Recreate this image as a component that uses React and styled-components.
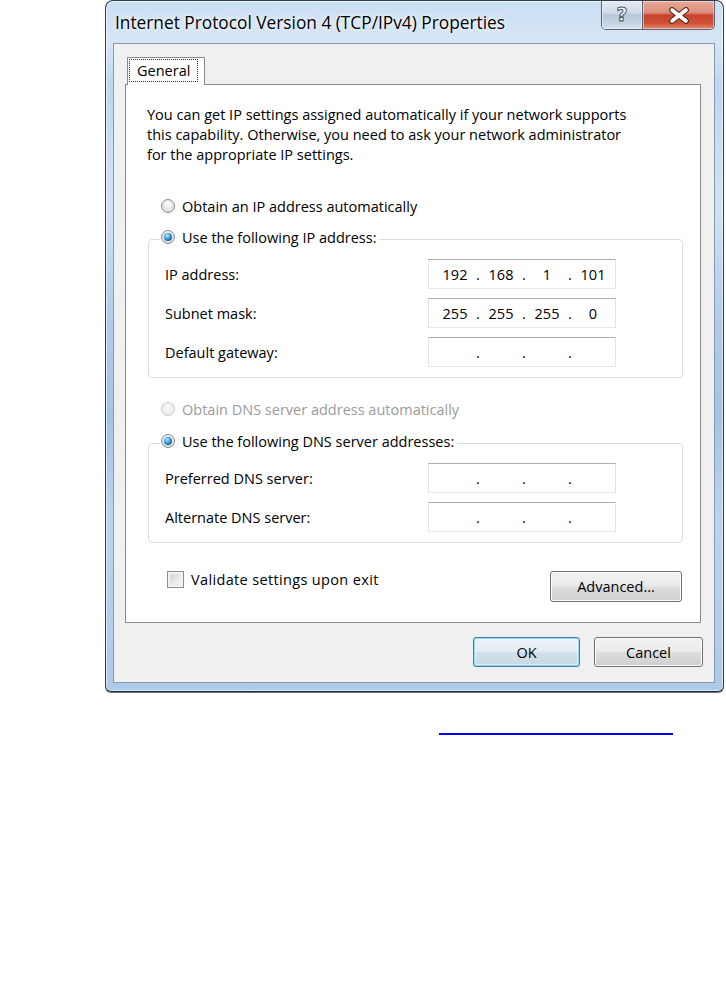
import React from 'react';
import styled, { createGlobalStyle } from 'styled-components';

const GlobalStyle = createGlobalStyle`
  html, body {
    margin: 0;
    padding: 0;
    background: #ffffff;
  }
  body {
    font-family: 'Segoe UI', 'Open Sans', 'Noto Sans', sans-serif;
    color: #000000;
  }
`;

const Page = styled.div`
  padding-left: 105px;
  display: flex;
  flex-direction: column;
`;

const Window = styled.div`
  width: 619px;
  box-sizing: border-box;
  border: 1px solid #2f3b48;
  border-bottom-color: #1f2833;
  border-radius: 8px 8px 6px 6px;
  padding: 0 8px 8px 7px;
  display: flex;
  flex-direction: column;
  background: linear-gradient(
    180deg,
    #cadef3 0%,
    #d7e6f6 6%,
    #c0d6ef 12%,
    #d2e2f4 30%,
    #b3cdeb 45%,
    #a3c3e7 60%,
    #bcd4ee 75%,
    #adcaea 100%
  );
  box-shadow: inset 0 0 0 1px rgba(255, 255, 255, 0.6), 0 1px 0 #6b7480;
`;

const TitleBar = styled.div`
  height: 42px;
  display: flex;
  align-items: flex-start;
  justify-content: space-between;
`;

const Title = styled.div`
  margin: 12px 0 0 2px;
  font-size: 17.3px;
  line-height: 20px;
  text-shadow: 0 0 8px rgba(255, 255, 255, 0.95), 0 0 3px rgba(255, 255, 255, 0.9);
`;

const CaptionButtons = styled.div`
  display: flex;
  height: 28px;
  border: 1px solid #5a6473;
  border-top: none;
  border-radius: 0 0 5px 5px;
  overflow: hidden;
`;

const CaptionButton = styled.div`
  width: ${(p) => p.$width}px;
  display: flex;
  align-items: center;
  justify-content: center;
  box-shadow: inset 0 0 0 1px rgba(255, 255, 255, 0.45);
  background: ${(p) =>
    p.$close
      ? 'linear-gradient(180deg, #e9a99a 0%, #dc8d7a 42%, #c8432c 50%, #cf4f35 78%, #e3886b 100%)'
      : 'linear-gradient(180deg, #e4ebf4 0%, #cfdbe8 42%, #b7c7da 50%, #c4d4e6 80%, #d6e3f1 100%)'};
  & + & {
    border-left: 1px solid #5a6473;
  }
`;

const HelpGlyph = styled.span`
  font-family: 'DejaVu Sans', sans-serif;
  font-weight: bold;
  font-size: 19px;
  line-height: 1;
  color: #ffffff;
  -webkit-text-stroke: 1px #4b5563;
  margin-top: -2px;
`;

const Client = styled.div`
  height: 640px;
  box-sizing: border-box;
  background: #f0f0f0;
  border: 1px solid #8799ad;
  padding: 13px 11px 15px 11px;
  display: flex;
  flex-direction: column;
`;

const TabStrip = styled.div`
  display: flex;
  padding-left: 2px;
`;

const Tab = styled.div`
  position: relative;
  margin-bottom: -1px;
  height: 28px;
  box-sizing: border-box;
  padding: 1px 6px 0 1px;
  border: 1px solid #898c95;
  border-bottom: none;
  background: #ffffff;
  font-size: 14.5px;
`;

const TabFocus = styled.div`
  height: 23px;
  box-sizing: border-box;
  padding: 0 7px;
  border: 1px dotted #333333;
  line-height: 21px;
`;

const TabPanel = styled.div`
  margin-right: 2px;
  border: 1px solid #898c95;
  background: #ffffff;
  padding: 20px 0 20px 0;
  display: flex;
  flex-direction: column;
  font-size: 14.5px;
`;

const Intro = styled.p`
  margin: 0 0 0 21px;
  line-height: 20px;
`;

const RadioRow = styled.label`
  display: flex;
  align-items: center;
  gap: 7px;
  height: 20px;
  margin: ${(p) => p.$margin || '0'};
  color: ${(p) => (p.$disabled ? '#9b9b9b' : '#000000')};
`;

const RadioMark = styled.span`
  width: 14px;
  height: 14px;
  box-sizing: border-box;
  border-radius: 50%;
  flex-shrink: 0;
  border: 1px solid ${(p) => (p.$disabled ? '#c9c9c9' : '#8b8d8f')};
  background: ${(p) =>
    p.$disabled
      ? 'radial-gradient(circle at 50% 35%, #fbfbfb, #e9e9e9 80%)'
      : 'radial-gradient(circle at 50% 35%, #ffffff, #d6d6d6 85%)'};
  display: flex;
  align-items: center;
  justify-content: center;

  &::after {
    content: '';
    display: ${(p) => (p.$checked ? 'block' : 'none')};
    width: 8px;
    height: 8px;
    border-radius: 50%;
    background: radial-gradient(circle at 40% 35%, #c6ecff 0%, #48aee6 35%, #11589a 75%, #0a3a66 100%);
  }
`;

const Group = styled.fieldset`
  margin: ${(p) => p.$margin || '0'} 17px 0 22px;
  border: 1px solid #d5dfe5;
  border-radius: 4px;
  padding: 8px 66px 10px 11px;
  min-inline-size: 0;
`;

const GroupLegend = styled.legend`
  padding: 0 3px 4px 1px;
`;

const Fields = styled.div`
  display: flex;
  flex-direction: column;
  gap: 9px;
  padding-left: 5px;
`;

const FieldRow = styled.div`
  display: grid;
  grid-template-columns: 1fr 188px;
  align-items: center;
`;

const IpBox = styled.div`
  height: 30px;
  box-sizing: border-box;
  border: 1px solid #e2e3ea;
  border-top-color: #abadb3;
  border-bottom-color: #e3e9ef;
  background: #ffffff;
  display: flex;
  align-items: center;
  padding-left: 6px;
`;

const Octet = styled.span`
  width: 40px;
  text-align: center;
`;

const Dot = styled.span`
  width: 6px;
  text-align: center;
`;

const BottomRow = styled.div`
  display: flex;
  justify-content: space-between;
  align-items: flex-start;
  margin: 26px 18px 0 41px;
`;

const CheckRow = styled.label`
  display: flex;
  align-items: center;
  gap: 7px;
  height: 20px;
`;

const CheckMark = styled.span`
  width: 17px;
  height: 17px;
  box-sizing: border-box;
  border: 1px solid #8e8f8f;
  background: linear-gradient(135deg, #cfcfcf 0%, #e6e6e6 50%, #f7f7f7 100%);
  box-shadow: inset 0 0 0 2px #f2f2f2;
`;

const CheckText = styled.span`
  letter-spacing: 0.35px;
`;

const Button = styled.button`
  width: ${(p) => p.$width}px;
  height: ${(p) => p.$height || 30}px;
  margin-top: ${(p) => p.$offset || 0}px;
  box-sizing: border-box;
  font-family: inherit;
  font-size: 14.5px;
  color: #000000;
  border-radius: 3px;
  border: 1px solid ${(p) => (p.$default ? '#3c7fb1' : '#707070')};
  background: ${(p) =>
    p.$default
      ? 'linear-gradient(180deg, #edf3f7 0%, #e3ecf2 48%, #d3e0e9 52%, #c8d7e2 100%)'
      : 'linear-gradient(180deg, #f2f2f2 0%, #ebebeb 48%, #dddddd 52%, #cfcfcf 100%)'};
  box-shadow: ${(p) =>
    p.$default
      ? 'inset 0 0 0 1px #8fd6f5, inset 0 0 0 2px rgba(255,255,255,0.5)'
      : 'inset 0 0 0 1px #fcfcfc'};
  padding: 0;
`;

const ButtonRow = styled.div`
  display: flex;
  justify-content: flex-end;
  gap: 14px;
  margin-top: 14px;
`;

const LinkRow = styled.div`
  margin: 41px 0 0 334px;
`;

const LinkRule = styled.a`
  display: block;
  width: 234px;
  height: 0;
  border-bottom: 2px solid #0000ff;
`;

const CloseIcon = () => (
  <svg width="24" height="17" viewBox="0 0 24 17">
    <path d="M5 3 L19 14 M19 3 L5 14" stroke="#5a2a22" strokeWidth="6" strokeLinecap="round" />
    <path d="M5 3 L19 14 M19 3 L5 14" stroke="#ffffff" strokeWidth="3.6" strokeLinecap="round" />
  </svg>
);

const Radio = ({ checked, disabled, children, margin }) => (
  <RadioRow $disabled={disabled} $margin={margin}>
    <RadioMark $checked={checked} $disabled={disabled} />
    {children}
  </RadioRow>
);

const IpField = ({ octets = ['', '', '', ''] }) => (
  <IpBox>
    {octets.map((o, i) => (
      <React.Fragment key={i}>
        <Octet>{o}</Octet>
        {i < 3 && <Dot>.</Dot>}
      </React.Fragment>
    ))}
  </IpBox>
);

const Field = ({ label, octets }) => (
  <FieldRow>
    <span>{label}</span>
    <IpField octets={octets} />
  </FieldRow>
);

const App = () => (
  <Page>
    <GlobalStyle />
    <Window>
      <TitleBar>
        <Title>Internet Protocol Version 4 (TCP/IPv4) Properties</Title>
        <CaptionButtons>
          <CaptionButton $width={40}>
            <HelpGlyph>?</HelpGlyph>
          </CaptionButton>
          <CaptionButton $width={71} $close>
            <CloseIcon />
          </CaptionButton>
        </CaptionButtons>
      </TitleBar>
      <Client>
        <TabStrip>
          <Tab>
            <TabFocus>General</TabFocus>
          </Tab>
        </TabStrip>
        <TabPanel>
          <Intro>
            You can get IP settings assigned automatically if your network supports
            <br />
            this capability. Otherwise, you need to ask your network administrator
            <br />
            for the appropriate IP settings.
          </Intro>
          <Radio margin="31px 0 0 35px">Obtain an IP address automatically</Radio>
          <Group $margin="11px">
            <GroupLegend>
              <Radio checked>Use the following IP address:</Radio>
            </GroupLegend>
            <Fields>
              <Field label="IP address:" octets={['192', '168', '1', '101']} />
              <Field label="Subnet mask:" octets={['255', '255', '255', '0']} />
              <Field label="Default gateway:" />
            </Fields>
          </Group>
          <Radio disabled margin="21px 0 0 35px">
            Obtain DNS server address automatically
          </Radio>
          <Group $margin="12px">
            <GroupLegend>
              <Radio checked>Use the following DNS server addresses:</Radio>
            </GroupLegend>
            <Fields>
              <Field label="Preferred DNS server:" />
              <Field label="Alternate DNS server:" />
            </Fields>
          </Group>
          <BottomRow>
            <CheckRow>
              <CheckMark />
              <CheckText>Validate settings upon exit</CheckText>
            </CheckRow>
            <Button $width={132} $height={31} $offset={2}>
              Advanced...
            </Button>
          </BottomRow>
        </TabPanel>
        <ButtonRow>
          <Button $width={107} $default>
            OK
          </Button>
          <Button $width={109}>Cancel</Button>
        </ButtonRow>
      </Client>
    </Window>
    <LinkRow>
      <LinkRule />
    </LinkRow>
  </Page>
);

export default App;
